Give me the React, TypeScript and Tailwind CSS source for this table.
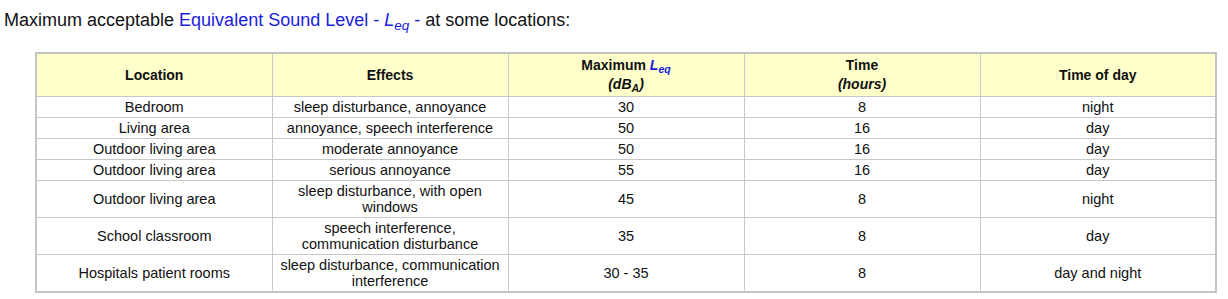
const rows: [string, string, string, string, string][] = [
  ['Bedroom', 'sleep disturbance, annoyance', '30', '8', 'night'],
  ['Living area', 'annoyance, speech interference', '50', '16', 'day'],
  ['Outdoor living area', 'moderate annoyance', '50', '16', 'day'],
  ['Outdoor living area', 'serious annoyance', '55', '16', 'day'],
  ['Outdoor living area', 'sleep disturbance, with open windows', '45', '8', 'night'],
  ['School classroom', 'speech interference, communication disturbance', '35', '8', 'day'],
  ['Hospitals patient rooms', 'sleep disturbance, communication interference', '30 - 35', '8', 'day and night'],
];

// subscript that doesn't stretch the line box
function Sub({ children }: { children: React.ReactNode }) {
  return <span className="relative top-[0.3em] text-[0.75em] leading-none">{children}</span>;
}

function Leq() {
  return (
    <span className="italic text-[#1c1ce0]">
      L<Sub>eq</Sub>
    </span>
  );
}

export default function App() {
  return (
    <div className="min-h-[299px] bg-white pt-[10px] font-['Liberation_Sans',Arial,sans-serif] text-[#111]">
      <p className="pl-[4px] text-[18px] leading-[20px]">
        Maximum acceptable{' '}
        <span className="text-[#1c1ce0]">Equivalent Sound Level - </span>
        <Leq />
        <span className="text-[#1c1ce0]"> -</span> at some locations:
      </p>

      <div className="mt-[22px] pl-[35px]">
        <table className="w-[1182px] table-fixed border-collapse border-2 border-[#c4c4c4] text-[14px] leading-[16px]">
          <thead>
            <tr className="h-[43px] bg-[#ffffcc] font-bold">
              <th className="border border-[#c8c8c8] px-[6px]">Location</th>
              <th className="border border-[#c8c8c8] px-[6px]">Effects</th>
              <th className="border border-[#c8c8c8] px-[6px] leading-[19px]">
                Maximum <Leq />
                <br />
                <span className="italic">
                  (dB<Sub>A</Sub>)
                </span>
              </th>
              <th className="border border-[#c8c8c8] px-[6px] leading-[19px]">
                Time
                <br />
                <span className="italic">(hours)</span>
              </th>
              <th className="border border-[#c8c8c8] px-[6px]">Time of day</th>
            </tr>
          </thead>
          <tbody>
            {rows.map((r, i) => (
              <tr key={i} className="text-center">
                {r.map((c, j) => (
                  <td key={j} className="border border-[#c8c8c8] px-[6px] py-[2px] text-[14.5px]">
                    {c}
                  </td>
                ))}
              </tr>
            ))}
          </tbody>
        </table>
      </div>
    </div>
  );
}
